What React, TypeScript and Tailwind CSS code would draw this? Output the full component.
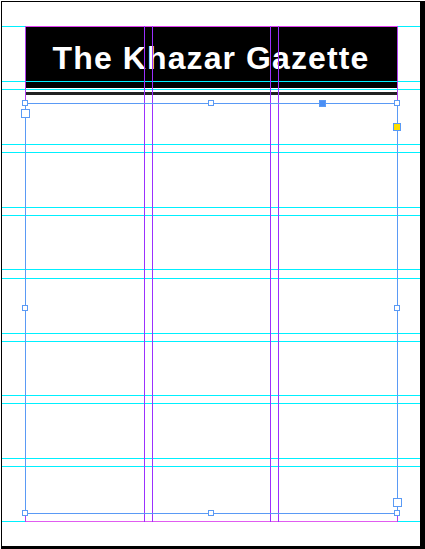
import React from 'react';

// page origin sits at (2,2) in the window, so every guide is given in window coords and shifted here
const O = 2;

const hGuides = [26, 81, 89, 144, 152, 207, 215, 269, 278, 333, 341, 395, 403, 458, 466, 521];
const columnGuides = [144, 152, 270, 278];

function Handle({ x, y, size, className }: { x: number; y: number; size: number; className: string }) {
  return (
    <div
      className={`absolute border border-[#5a9af5] ${className}`}
      style={{ left: x - O, top: y - O, width: size, height: size }}
    />
  );
}

export default function App() {
  return (
    <div className="w-[425px] h-[549px] bg-white pt-[1px] pl-[1px] overflow-hidden">
      <div className="w-[424px] h-[548px] bg-black pt-[1px] pl-[1px]">
        <div className="relative w-[418px] h-[544px] bg-white pl-[23px] pt-[24px]">
          {/* masthead */}
          <div className="w-[372px] h-[62px] bg-black flex items-center justify-center pt-[1px]">
            <span className="font-['Liberation_Sans',Arial,sans-serif] font-bold text-white text-[32px] leading-none tracking-[1.1px]">
              The Khazar Gazette
            </span>
          </div>
          <div className="mt-[4px] w-[372px] h-[3px] bg-[#222]" />

          {/* baseline / ruler guides */}
          {hGuides.map((y) => (
            <div key={y} className="absolute left-0 right-0 h-px bg-[#00f0ff]" style={{ top: y - O }} />
          ))}

          {/* margins */}
          <div className="absolute left-[23px] top-[24px] w-[373px] h-px bg-[#e040f0]" />
          <div className="absolute left-[23px] top-[519px] w-[373px] h-px bg-[#e05cf0]" />
          <div className="absolute left-[23px] top-[24px] w-px h-[496px] bg-[#b040f0]" />
          <div className="absolute left-[395px] top-[24px] w-px h-[496px] bg-[#b040f0]" />

          {/* columns */}
          {columnGuides.map((x) => (
            <div key={x} className="absolute top-[24px] w-px h-[496px] bg-[#9b30ff]" style={{ left: x - O }} />
          ))}

          {/* selected text frame */}
          <div className="absolute left-[23px] top-[101px] w-[373px] h-[411px] border border-[#5a9af5]" />
          <Handle x={22} y={100} size={6} className="bg-white" />
          <Handle x={208} y={100} size={6} className="bg-white" />
          <Handle x={394} y={100} size={6} className="bg-white" />
          <Handle x={22} y={305} size={6} className="bg-white" />
          <Handle x={394} y={305} size={6} className="bg-white" />
          <Handle x={22} y={510} size={6} className="bg-white" />
          <Handle x={208} y={510} size={6} className="bg-white" />
          <Handle x={394} y={510} size={6} className="bg-white" />
          <Handle x={21} y={109} size={9} className="bg-white" />
          <Handle x={393} y={498} size={9} className="bg-white" />
          <Handle x={319} y={100} size={7} className="bg-[#4a8ff5]" />
          <Handle x={393} y={123} size={8} className="bg-[#ffe000]" />
        </div>
      </div>
    </div>
  );
}
